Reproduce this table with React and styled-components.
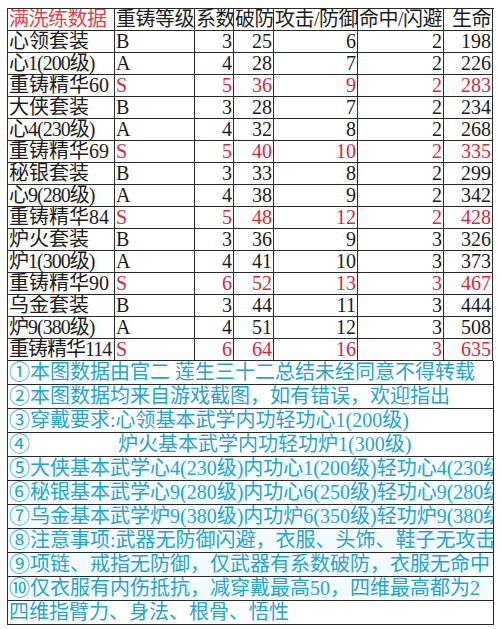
import React from 'react';
import styled, { createGlobalStyle } from 'styled-components';

const GlobalStyle = createGlobalStyle`
  html, body {
    margin: 0;
    padding: 0;
    background: #ffffff;
  }
  body {
    font-family: "Liberation Serif", "Noto Sans CJK SC", serif;
  }
`;

const Page = styled.div`
  width: 500px;
  height: 629px;
  padding: 8px 6px 0 7px;
  box-sizing: border-box;
  overflow: hidden;
`;

const Sheet = styled.div`
  width: 487px;
  border-top: 1.5px solid #2a2a2a;
  border-left: 1.5px solid #2a2a2a;
  box-sizing: border-box;
`;

const DataGrid = styled.div`
  display: grid;
  grid-template-columns: 107px 80px 39px 40px 84px 86px 49px;
  grid-auto-rows: 22px;
`;

const Cell = styled.div`
  box-sizing: border-box;
  border-right: 1.5px solid #2a2a2a;
  border-bottom: 1.5px solid #2a2a2a;
  font-size: 20px;
  line-height: 21px;
  white-space: nowrap;
  overflow: hidden;
  color: ${(p) => (p.$red ? '#d42b3c' : '#1c1c1c')};
  text-align: ${(p) => (p.$num ? 'right' : 'left')};
  padding: ${(p) => (p.$num ? '0 1px 0 0' : '0 0 0 1px')};
  letter-spacing: ${(p) => (p.$tight ? '-1px' : '0')};
`;

const HeadCell = styled(Cell)`
  color: ${(p) => (p.$red ? '#e4414e' : '#1c1c1c')};
  letter-spacing: -0.5px;
`;

const NoteRow = styled.div`
  box-sizing: border-box;
  height: 24px;
  border-right: 1.5px solid #2a2a2a;
  border-bottom: 1.5px solid #2a2a2a;
  font-size: 20px;
  line-height: 23px;
  color: #27a4c9;
  white-space: nowrap;
  overflow: hidden;
  padding-left: 1px;
  background: ${(p) => (p.$tint ? '#f3fbfe' : '#ffffff')};
`;

const Mark = styled.span`
  font-size: 21px;
  line-height: 20px;
`;

const Gap = styled.span`
  display: inline-block;
  width: ${(p) => p.$w}px;
`;

const headers = ['重铸等级', '系数', '破防', '攻击/防御', '命中/闪避', '生命'];

const rows = [
  ['心领套装', 'B', 3, 25, 6, 2, 198],
  ['心1(200级)', 'A', 4, 28, 7, 2, 226],
  ['重铸精华60', 'S', 5, 36, 9, 2, 283],
  ['大侠套装', 'B', 3, 28, 7, 2, 234],
  ['心4(230级)', 'A', 4, 32, 8, 2, 268],
  ['重铸精华69', 'S', 5, 40, 10, 2, 335],
  ['秘银套装', 'B', 3, 33, 8, 2, 299],
  ['心9(280级)', 'A', 4, 38, 9, 2, 342],
  ['重铸精华84', 'S', 5, 48, 12, 2, 428],
  ['炉火套装', 'B', 3, 36, 9, 3, 326],
  ['炉1(300级)', 'A', 4, 41, 10, 3, 373],
  ['重铸精华90', 'S', 6, 52, 13, 3, 467],
  ['乌金套装', 'B', 3, 44, 11, 3, 444],
  ['炉9(380级)', 'A', 4, 51, 12, 3, 508],
  ['重铸精华114', 'S', 6, 64, 16, 3, 635],
];

const notes = [
  ['①', '本图数据由官二 莲生三十二总结未经同意不得转载'],
  ['②', '本图数据均来自游戏截图，如有错误，欢迎指出'],
  ['③', '穿戴要求:心领基本武学内功轻功心1(200级)'],
  ['④', '炉火基本武学内功轻功炉1(300级)', 88],
  ['⑤', '大侠基本武学心4(230级)内功心1(200级)轻功心4(230级)'],
  ['⑥', '秘银基本武学心9(280级)内功心6(250级)轻功心9(280级)'],
  ['⑦', '乌金基本武学炉9(380级)内功炉6(350级)轻功炉9(380级)'],
  ['⑧', '注意事项:武器无防御闪避，衣服、头饰、鞋子无攻击'],
  ['⑨', '项链、戒指无防御，仅武器有系数破防，衣服无命中'],
  ['⑩', '仅衣服有内伤抵抗，减穿戴最高50，四维最高都为2'],
  ['', '四维指臂力、身法、根骨、悟性'],
];

export default function App() {
  return (
    <>
      <GlobalStyle />
      <Page>
        <Sheet>
          <DataGrid>
            <HeadCell $red>满洗练数据</HeadCell>
            {headers.map((h, i) => (
              <HeadCell key={h} $num={i === 5}>{h}</HeadCell>
            ))}
            {rows.map((r) => {
              const red = r[1] === 'S';
              return (
                <React.Fragment key={r[0]}>
                  <Cell $tight={r[0].length > 6}>{r[0]}</Cell>
                  <Cell $red={red}>{r[1]}</Cell>
                  {r.slice(2).map((v, i) => (
                    <Cell key={i} $num $red={red}>{v}</Cell>
                  ))}
                </React.Fragment>
              );
            })}
          </DataGrid>
          {notes.map(([mark, text, gap], i) => (
            <NoteRow key={i} $tint={i >= 4 && i <= 9}>
              {mark && <Mark>{mark}</Mark>}
              {gap && <Gap $w={gap} />}
              {text}
            </NoteRow>
          ))}
        </Sheet>
      </Page>
    </>
  );
}
